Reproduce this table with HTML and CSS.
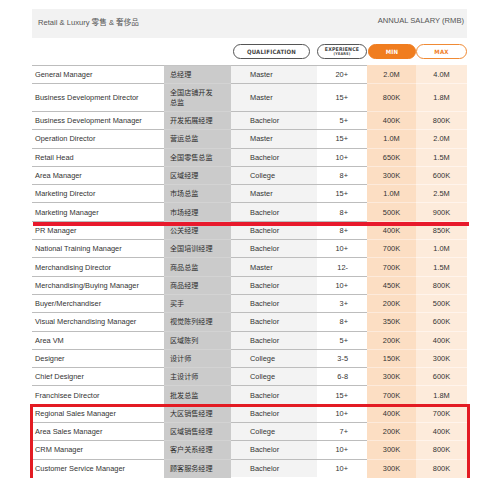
FILE: index.html
```html
<!DOCTYPE html>
<html>
<head>
<meta charset="utf-8">
<link rel="stylesheet" href="styles.css">
</head>
<body>
<div class="page">
  <div class="band">
    <span class="band-title">Retail &amp; Luxury 零售 &amp; 奢侈品</span>
    <span class="band-right">ANNUAL SALARY (RMB)</span>
  </div>
  <div class="heads">
    <div></div>
    <div></div>
    <div class="pill pill-qual">QUALIFICATION</div>
    <div class="pill pill-exp"><span>EXPERIENCE</span><span class="yrs">(YEARS)</span></div>
    <div class="pill pill-min">MIN</div>
    <div class="pill pill-max">MAX</div>
  </div>
  <div class="table">
    <div class="row first"><div class="c1">General Manager</div><div class="c2">总经理</div><div class="c3">Master</div><div class="c4">20+</div><div class="c5">2.0M</div><div class="c6">4.0M</div></div>
    <div class="row tall"><div class="c1">Business Development Director</div><div class="c2 two">全国店铺开发<br>总监</div><div class="c3">Master</div><div class="c4">15+</div><div class="c5">800K</div><div class="c6">1.8M</div></div>
    <div class="row"><div class="c1">Business Development Manager</div><div class="c2">开发拓展经理</div><div class="c3">Bachelor</div><div class="c4">5+</div><div class="c5">400K</div><div class="c6">800K</div></div>
    <div class="row"><div class="c1">Operation Director</div><div class="c2">营运总监</div><div class="c3">Master</div><div class="c4">15+</div><div class="c5">1.0M</div><div class="c6">2.0M</div></div>
    <div class="row"><div class="c1">Retail Head</div><div class="c2">全国零售总监</div><div class="c3">Bachelor</div><div class="c4">10+</div><div class="c5">650K</div><div class="c6">1.5M</div></div>
    <div class="row"><div class="c1">Area Manager</div><div class="c2">区域经理</div><div class="c3">College</div><div class="c4">8+</div><div class="c5">300K</div><div class="c6">600K</div></div>
    <div class="row"><div class="c1">Marketing Director</div><div class="c2">市场总监</div><div class="c3">Master</div><div class="c4">15+</div><div class="c5">1.0M</div><div class="c6">2.5M</div></div>
    <div class="row"><div class="c1">Marketing Manager</div><div class="c2">市场经理</div><div class="c3">Bachelor</div><div class="c4">8+</div><div class="c5">500K</div><div class="c6">900K</div></div>
    <div class="row"><div class="c1">PR Manager</div><div class="c2">公关经理</div><div class="c3">Bachelor</div><div class="c4">8+</div><div class="c5">400K</div><div class="c6">850K</div></div>
    <div class="row"><div class="c1">National Training Manager</div><div class="c2">全国培训经理</div><div class="c3">Bachelor</div><div class="c4">10+</div><div class="c5">700K</div><div class="c6">1.0M</div></div>
    <div class="row"><div class="c1">Merchandising Director</div><div class="c2">商品总监</div><div class="c3">Master</div><div class="c4">12-</div><div class="c5">700K</div><div class="c6">1.5M</div></div>
    <div class="row"><div class="c1">Merchandising/Buying Manager</div><div class="c2">商品经理</div><div class="c3">Bachelor</div><div class="c4">10+</div><div class="c5">450K</div><div class="c6">800K</div></div>
    <div class="row"><div class="c1">Buyer/Merchandiser</div><div class="c2">买手</div><div class="c3">Bachelor</div><div class="c4">3+</div><div class="c5">200K</div><div class="c6">500K</div></div>
    <div class="row"><div class="c1">Visual Merchandising Manager</div><div class="c2">视觉陈列经理</div><div class="c3">Bachelor</div><div class="c4">8+</div><div class="c5">350K</div><div class="c6">600K</div></div>
    <div class="row"><div class="c1">Area VM</div><div class="c2">区域陈列</div><div class="c3">Bachelor</div><div class="c4">5+</div><div class="c5">200K</div><div class="c6">400K</div></div>
    <div class="row"><div class="c1">Designer</div><div class="c2">设计师</div><div class="c3">College</div><div class="c4">3-5</div><div class="c5">150K</div><div class="c6">300K</div></div>
    <div class="row"><div class="c1">Chief Designer</div><div class="c2">主设计师</div><div class="c3">College</div><div class="c4">6-8</div><div class="c5">300K</div><div class="c6">600K</div></div>
    <div class="row"><div class="c1">Franchisee Director</div><div class="c2">批发总监</div><div class="c3">Bachelor</div><div class="c4">15+</div><div class="c5">700K</div><div class="c6">1.8M</div></div>
    <div class="row"><div class="c1">Regional Sales Manager</div><div class="c2">大区销售经理</div><div class="c3">Bachelor</div><div class="c4">10+</div><div class="c5">400K</div><div class="c6">700K</div></div>
    <div class="row"><div class="c1">Area Sales Manager</div><div class="c2">区域销售经理</div><div class="c3">College</div><div class="c4">7+</div><div class="c5">200K</div><div class="c6">400K</div></div>
    <div class="row"><div class="c1">CRM Manager</div><div class="c2">客户关系经理</div><div class="c3">Bachelor</div><div class="c4">10+</div><div class="c5">300K</div><div class="c6">800K</div></div>
    <div class="row last"><div class="c1">Customer Service Manager</div><div class="c2">顾客服务经理</div><div class="c3">Bachelor</div><div class="c4">10+</div><div class="c5">300K</div><div class="c6">800K</div></div>
  </div>
  <div class="redbar"></div>
  <div class="redbox"></div>
</div>
</body>
</html>
```
FILE: styles.css
```css
html, body {
  margin: 0;
  padding: 0;
  background: #ffffff;
}

.page {
  position: relative;
  width: 435px;
  padding: 9px 33px 0 32px;
  font-family: "Liberation Sans", Arial, "Noto Sans CJK SC", sans-serif;
  font-size: 7.4px;
  color: #333333;
}

.band {
  height: 29px;
  background: #f2f2f2;
  display: flex;
  justify-content: space-between;
  align-items: flex-start;
  padding: 7px 3px 0 6px;
  box-sizing: border-box;
  color: #555555;
  font-size: 7.6px;
}

.band-title {
  font-family: "Liberation Sans", "Noto Sans CJK SC", sans-serif;
}

.heads {
  display: grid;
  grid-template-columns: 132px 67px 86px 50px 49px 51px;
  margin-top: 6px;
  height: 15px;
}

.pill {
  box-sizing: border-box;
  height: 15px;
  border-radius: 8px;
  border: 1px solid #555555;
  display: flex;
  flex-direction: column;
  align-items: center;
  justify-content: center;
  font-family: "Liberation Sans Narrow", "DejaVu Sans Condensed", "Liberation Sans", sans-serif;
  font-weight: bold;
  font-size: 6px;
  letter-spacing: 0.2px;
  color: #444444;
  line-height: 1;
}

.pill-qual {
  margin: 0 7px 0 2px;
}

.pill-exp {
  font-size: 5.2px;
  line-height: 5.6px;
}

.pill-exp .yrs {
  font-size: 3.8px;
  line-height: 4.4px;
}

.pill-min {
  background: #f07d1f;
  border-color: #f07d1f;
  color: #ffffff;
  margin-left: 1px;
}

.pill-max {
  border-color: #f08a34;
  color: #f07d1f;
  background: #ffffff;
}

.table {
  margin-top: 6px;
}

.row {
  display: grid;
  grid-template-columns: 132px 67px 86px 50px 49px 51px;
  height: 18.3px;
}

.row.first {
  height: 19px;
}

.row.tall {
  height: 28px;
}

.row > div {
  box-sizing: border-box;
  display: flex;
  align-items: center;
  border-bottom: 1px solid #bdbdbd;
  white-space: nowrap;
}

.row.first > .c1,
.row.first > .c2,
.row.first > .c3,
.row.first > .c4 {
  border-top: 1px solid #bdbdbd;
}

.row.first > .c2 {
  border-top-color: #c4c4c4;
}

.c1 {
  padding-left: 3px;
  color: #333333;
  background: #ffffff;
}

.c2 {
  padding-left: 6px;
  background: #cbcbcb;
  border-bottom-color: #d3d3d3 !important;
  font-family: "Noto Sans CJK SC", sans-serif;
  font-size: 7.1px;
  line-height: 9px;
  color: #2e2e2e;
}

.c2.two {
  line-height: 9.5px;
}

.c3 {
  padding-left: 19px;
  background: #f3f3f3;
}

.c4 {
  justify-content: flex-end;
  padding-right: 19px;
  background: #ffffff;
}

.c5 {
  justify-content: center;
  background: #fcdec3;
  border-bottom-color: #fdeadb !important;
}

.c6 {
  justify-content: center;
  background: #fdebdb;
  border-bottom-color: #fff4ec !important;
}

.row.last > .c1,
.row.last > .c3,
.row.last > .c4 {
  border-bottom-color: #ffffff;
}

.row.last > .c2 {
  border-bottom-color: #cbcbcb !important;
}

.row.last > .c5 {
  border-bottom-color: #fcdec3 !important;
}

.row.last > .c6 {
  border-bottom-color: #fdebdb !important;
}

.redbar {
  position: absolute;
  left: 33px;
  top: 222px;
  width: 436px;
  height: 4px;
  background: #e8192c;
}

.redbox {
  position: absolute;
  left: 30px;
  top: 404px;
  width: 440px;
  height: 78px;
  box-sizing: border-box;
  border: 3px solid #e31b23;
}
```
